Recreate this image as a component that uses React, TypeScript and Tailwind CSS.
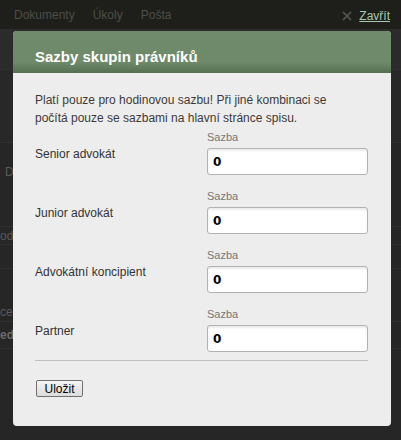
import { X } from "lucide-react";

const rows = ["Senior advokát", "Junior advokát", "Advokátní koncipient", "Partner"];

function RateRow({ label }: { label: string }) {
  return (
    <div className="flex items-center">
      <div className="w-[172px] pt-[4px] text-[12px] leading-[15px] text-[#333]">{label}</div>
      <div className="flex flex-col w-[161px]">
        <span className="text-[11px] leading-[16px] text-[#777]">Sazba</span>
        <input
          readOnly
          value="0"
          className="mt-[3px] h-[27px] w-full rounded-[3px] border border-[#b2b2b2] bg-white px-[5px] text-[12px] font-bold text-black shadow-[inset_0_2px_2px_rgba(0,0,0,0.08)] outline-none [font-family:Tahoma,'DejaVu_Sans',sans-serif]"
        />
      </div>
    </div>
  );
}

export default function App() {
  return (
    <div className="relative h-[440px] w-[401px] overflow-hidden bg-[#262626] [font-family:'Liberation_Sans',Arial,sans-serif]">
      {/* page under the overlay */}
      <div className="flex h-[29px] items-center gap-[18px] bg-[#1e1f1b] pl-[14px] text-[12px] text-[#4d4e48]">
        <span>Dokumenty</span>
        <span>Úkoly</span>
        <span>Pošta</span>
      </div>
      <div className="h-[41px] border-b border-[#303030] bg-[#2b2b2b]" />
      <div className="h-[73px] border-b border-[#313131] bg-[#282828]" />
      <div className="h-[84px] border-b border-[#303030] pl-[5px] pt-[20px] text-[12px] leading-[18px] text-[#5a5a5a]">D</div>
      <div className="h-[18px] border-b border-[#303030] text-[12px] leading-[18px] text-[#5a5a5a]">od</div>
      <div className="h-[24px] border-b border-[#303030]" />
      <div className="flex h-[53px] items-end border-b border-[#303030] text-[12px] leading-[18px] text-[#5a5a5a]">ce</div>
      <div className="h-[27px] border-b border-[#303030] text-[12px] font-bold leading-[26px] text-[#6a6a6a]">ede</div>

      <div className="absolute right-[11px] top-[7px] flex items-center gap-[5px]">
        <X size={14} strokeWidth={3} className="text-[#555]" />
        <a className="text-[12px] text-[#a9c9b2] underline">Zavřít</a>
      </div>

      <div className="absolute left-[13px] top-[31px] flex h-[395px] w-[378px] flex-col overflow-hidden rounded-[4px] bg-[#ededed]">
        <div className="flex h-[42px] items-center bg-[linear-gradient(to_bottom,#6f8b6b_0%,#6e8a6a_75%,#566e52_100%)] px-[22px] pt-[10px]">
          <h2 className="text-[15px] font-bold text-white">Sazby skupin právníků</h2>
        </div>
        <div className="flex flex-col pl-[22px] pr-[23px] pt-[18px]">
          <p className="text-[12px] leading-[18px] text-[#3d3a36]">
            Platí pouze pro hodinovou sazbu! Při jiné kombinaci se
            <br />
            počítá pouze se sazbami na hlavní stránce spisu.
          </p>
          <div className="mt-[2px] flex flex-col gap-[13px]">
            {rows.map((r) => (
              <RateRow key={r} label={r} />
            ))}
          </div>
          <div className="mt-[8px] border-t border-[#c0c0c0]" />
          <div className="flex pt-[19px]">
            <button className="ml-[1px] h-[17px] w-[47px] rounded-[2px] border border-[#707070] bg-[linear-gradient(to_bottom,#f4f4f4,#dcdcdc)] p-0 text-[12px] leading-[14px] text-black">
              Uložit
            </button>
          </div>
        </div>
      </div>
    </div>
  );
}
